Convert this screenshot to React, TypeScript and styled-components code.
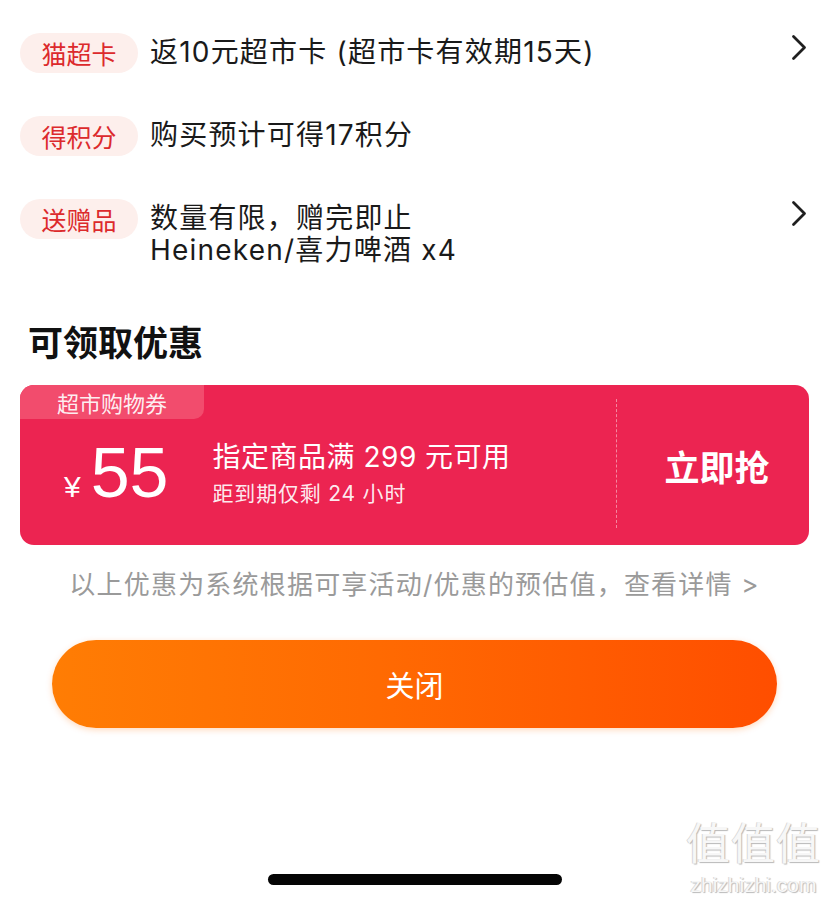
import React from "react";
import styled, { createGlobalStyle } from "styled-components";

const GlobalStyle = createGlobalStyle`
  html, body { margin: 0; padding: 0; background: #ffffff; }
  body {
    font-family: "Inter", "Noto Sans CJK SC", sans-serif;
    color: #1a1a1a;
    -webkit-font-smoothing: antialiased;
  }
`;

const Page = styled.div`
  position: relative;
  width: 829px;
  height: 901px;
  box-sizing: border-box;
  padding: 33px 20px 0 20px;
  display: flex;
  flex-direction: column;
  overflow: hidden;
`;

const InfoList = styled.div`
  display: flex;
  flex-direction: column;
  gap: 43px;
`;

const Row = styled.div`
  display: flex;
  align-items: flex-start;
  gap: 12px;
`;

const Badge = styled.span`
  flex: none;
  width: 118px;
  height: 40px;
  box-sizing: border-box;
  text-align: center;
  border-radius: 20px;
  background: #fdefec;
  color: #dc2a2c;
  font-size: 25px;
  line-height: 40px;
  font-family: "Noto Sans CJK SC", sans-serif;
`;

const RowText = styled.div`
  flex: 1;
  margin-top: 3px;
  font-size: 28px;
  line-height: 32px;
  letter-spacing: 1.2px;
  color: #1a1a1a;
  font-family: "Inter", "Noto Sans CJK SC", sans-serif;
`;

const Chevron = styled.svg`
  flex: none;
  margin: 1px 2px 0 0;
  width: 16px;
  height: 27px;
`;

const Title = styled.h2`
  margin: 53px 0 0 8px;
  font-size: 35px;
  line-height: 44px;
  font-weight: 700;
  color: #111;
  font-family: "Noto Sans CJK SC", sans-serif;
`;

const Coupon = styled.div`
  margin-top: 22px;
  height: 160px;
  border-radius: 14px;
  background: #ec2451;
  display: flex;
  overflow: hidden;
  color: #fff;
`;

const CouponMain = styled.div`
  flex: 1;
  display: flex;
  flex-direction: column;
`;

const CouponTag = styled.div`
  align-self: flex-start;
  width: 184px;
  height: 34px;
  background: #f24c6d;
  border-bottom-right-radius: 10px;
  font-size: 22px;
  line-height: 34px;
  text-align: center;
  color: rgba(255, 255, 255, 0.92);
  font-family: "Noto Sans CJK SC", sans-serif;
`;

const CouponBody = styled.div`
  flex: 1;
  display: flex;
  align-items: center;
  padding: 0 0 18px 44px;
`;

const Price = styled.div`
  display: flex;
  align-items: baseline;
  gap: 10px;
  margin-right: 44px;
  font-family: "Liberation Sans", "Inter", sans-serif;
`;

const Yen = styled.span`
  font-size: 30px;
`;

const Amount = styled.span`
  font-size: 70px;
  line-height: 72px;
`;

const CouponInfo = styled.div`
  display: flex;
  flex-direction: column;
  gap: 6px;
`;

const CouponTitle = styled.div`
  font-size: 28px;
  line-height: 36px;
  letter-spacing: 0.5px;
`;

const CouponSub = styled.div`
  font-size: 21px;
  line-height: 26px;
  letter-spacing: 0.8px;
  color: rgba(255, 255, 255, 0.92);
`;

const Divider = styled.div`
  flex: none;
  width: 0;
  margin: 14px 0 17px 0;
  border-left: 1px dashed rgba(255, 255, 255, 0.45);
`;

const CouponAction = styled.div`
  width: 192px;
  box-sizing: border-box;
  padding-left: 8px;
  display: flex;
  align-items: center;
  justify-content: center;
  font-size: 35px;
  font-weight: 700;
  font-family: "Noto Sans CJK SC", sans-serif;
`;

const Note = styled.div`
  margin-top: 22px;
  text-align: center;
  font-size: 26px;
  line-height: 36px;
  letter-spacing: 1.2px;
  color: #9a9a9a;
`;

const CloseButton = styled.button`
  margin: 37px 32px 0 32px;
  height: 88px;
  border: none;
  border-radius: 44px;
  background: linear-gradient(90deg, #ff7d04 0%, #ff6a02 45%, #ff4e00 100%);
  box-shadow: 0 2px 6px rgba(255, 110, 0, 0.25);
  color: #fff;
  font-size: 29px;
  font-family: "Noto Sans CJK SC", sans-serif;
  cursor: pointer;
`;

const HomeIndicator = styled.div`
  align-self: center;
  margin-top: 146px;
  width: 294px;
  height: 11px;
  border-radius: 6px;
  background: #050505;
`;

const Watermark = styled.div`
  position: absolute;
  right: 8px;
  bottom: 4px;
  display: flex;
  flex-direction: column;
  align-items: center;
  color: #f7f7f7;
  text-shadow: 1px 1px 1px #b8b8b8, -1px 0 0 #d8d8d8;
  pointer-events: none;
`;

const WatermarkMark = styled.div`
  font-size: 44px;
  line-height: 64px;
  font-family: "Noto Sans CJK SC", sans-serif;
  letter-spacing: 1px;
`;

const WatermarkUrl = styled.div`
  font-size: 21px;
  line-height: 24px;
  font-family: "Liberation Sans", sans-serif;
`;

const ChevronIcon = () => (
  <Chevron viewBox="0 0 16 27">
    <polyline
      points="2.5,2.5 13.5,13.5 2.5,24.5"
      fill="none"
      stroke="#1f1f1f"
      strokeWidth="2.8"
      strokeLinecap="round"
      strokeLinejoin="round"
    />
  </Chevron>
);

export default function App() {
  return (
    <>
      <GlobalStyle />
      <Page>
        <InfoList>
          <Row>
            <Badge>猫超卡</Badge>
            <RowText>返10元超市卡 (超市卡有效期15天)</RowText>
            <ChevronIcon />
          </Row>
          <Row>
            <Badge>得积分</Badge>
            <RowText>购买预计可得17积分</RowText>
          </Row>
          <Row>
            <Badge>送赠品</Badge>
            <RowText>
              数量有限，赠完即止
              <br />
              Heineken/喜力啤酒 x4
            </RowText>
            <ChevronIcon />
          </Row>
        </InfoList>

        <Title>可领取优惠</Title>

        <Coupon>
          <CouponMain>
            <CouponTag>超市购物券</CouponTag>
            <CouponBody>
              <Price>
                <Yen>¥</Yen>
                <Amount>55</Amount>
              </Price>
              <CouponInfo>
                <CouponTitle>指定商品满 299 元可用</CouponTitle>
                <CouponSub>距到期仅剩 24 小时</CouponSub>
              </CouponInfo>
            </CouponBody>
          </CouponMain>
          <Divider />
          <CouponAction>立即抢</CouponAction>
        </Coupon>

        <Note>以上优惠为系统根据可享活动/优惠的预估值，查看详情 &gt;</Note>

        <CloseButton>关闭</CloseButton>

        <HomeIndicator />

        <Watermark>
          <WatermarkMark>值值值</WatermarkMark>
          <WatermarkUrl>zhizhizhi.com</WatermarkUrl>
        </Watermark>
      </Page>
    </>
  );
}
